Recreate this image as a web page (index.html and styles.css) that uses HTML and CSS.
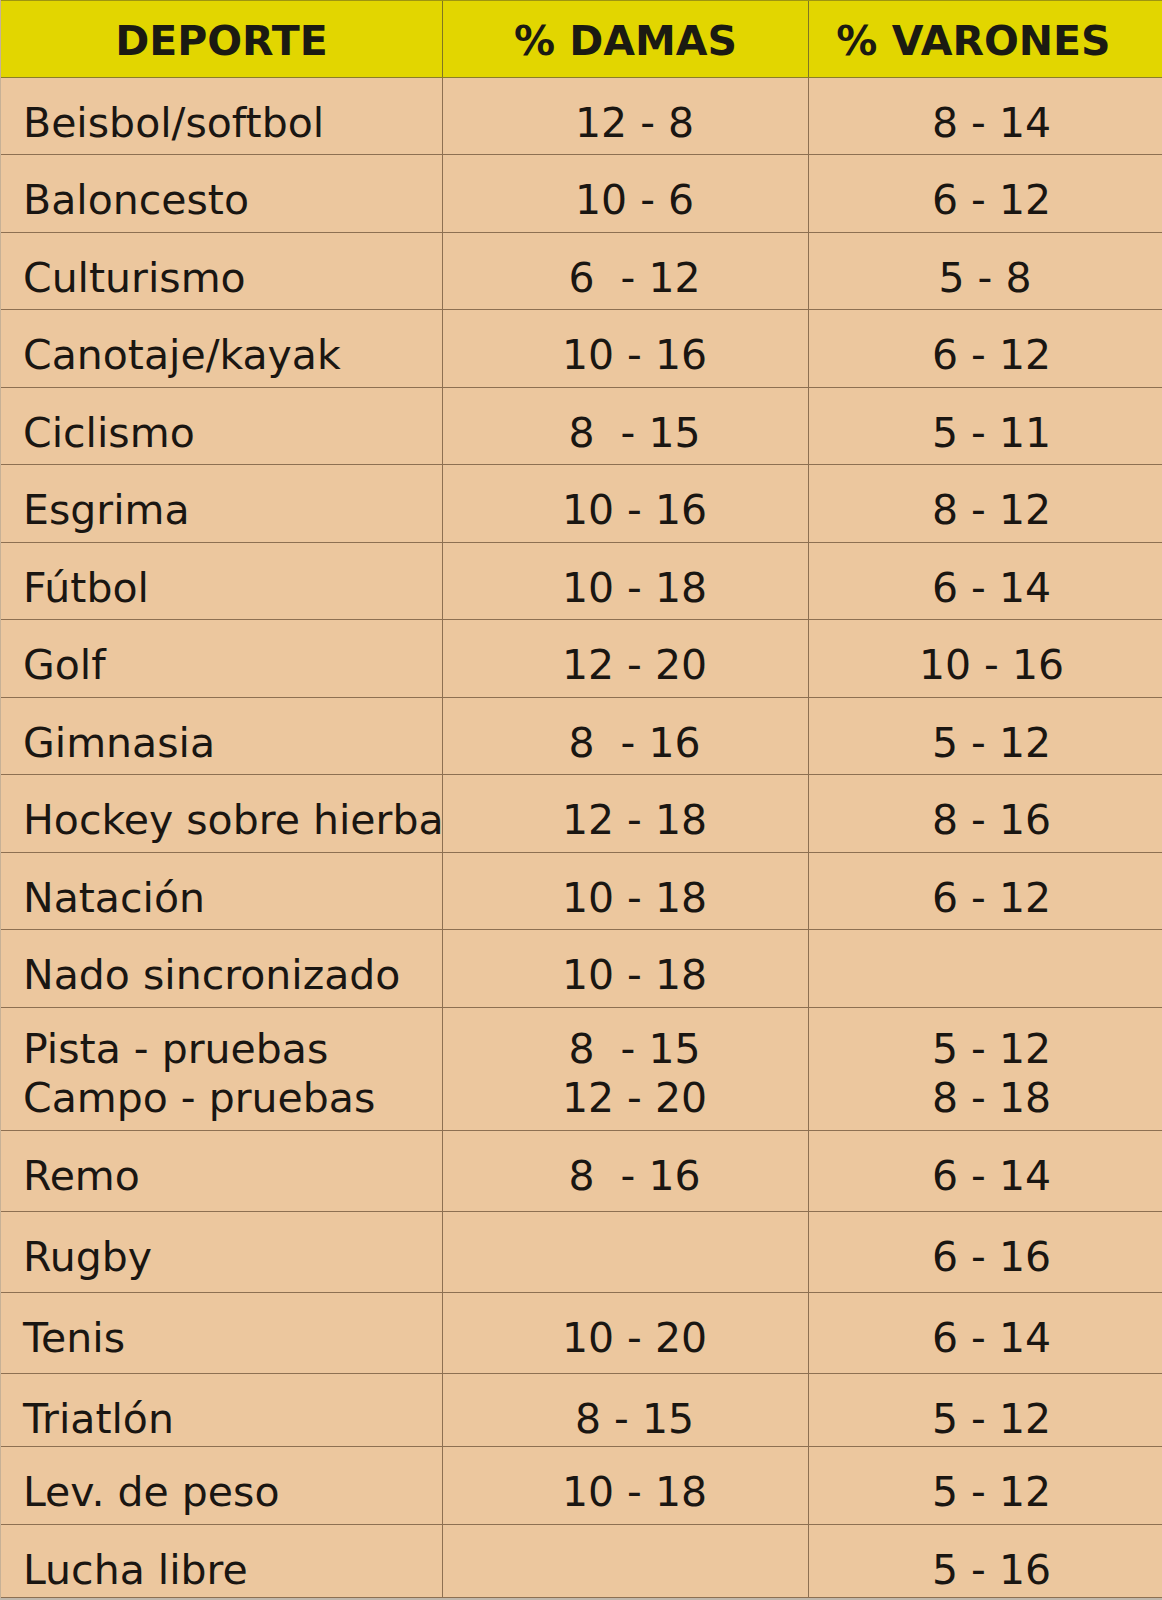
FILE: index.html
```html
<!DOCTYPE html>
<html lang="es">
<head>
<meta charset="utf-8">
<title>Porcentaje de grasa por deporte</title>
<link rel="stylesheet" href="styles.css">
</head>
<body>
<div class="sheet">
  <div class="row head">
    <div class="cell">DEPORTE</div>
    <div class="cell">% DAMAS</div>
    <div class="cell">% VARONES</div>
  </div>
  <div class="row">
    <div class="cell name">Beisbol/softbol</div>
    <div class="cell num">12 - 8</div>
    <div class="cell num v">8 - 14</div>
  </div>
  <div class="row">
    <div class="cell name">Baloncesto</div>
    <div class="cell num">10 - 6</div>
    <div class="cell num v">6 - 12</div>
  </div>
  <div class="row">
    <div class="cell name">Culturismo</div>
    <div class="cell num">6  - 12</div>
    <div class="cell num v">5 - 8 </div>
  </div>
  <div class="row">
    <div class="cell name">Canotaje/kayak</div>
    <div class="cell num">10 - 16</div>
    <div class="cell num v">6 - 12</div>
  </div>
  <div class="row">
    <div class="cell name">Ciclismo</div>
    <div class="cell num">8  - 15</div>
    <div class="cell num v">5 - 11</div>
  </div>
  <div class="row">
    <div class="cell name">Esgrima</div>
    <div class="cell num">10 - 16</div>
    <div class="cell num v">8 - 12</div>
  </div>
  <div class="row">
    <div class="cell name">Fútbol</div>
    <div class="cell num">10 - 18</div>
    <div class="cell num v">6 - 14</div>
  </div>
  <div class="row">
    <div class="cell name">Golf</div>
    <div class="cell num">12 - 20</div>
    <div class="cell num v">10 - 16</div>
  </div>
  <div class="row">
    <div class="cell name">Gimnasia</div>
    <div class="cell num">8  - 16</div>
    <div class="cell num v">5 - 12</div>
  </div>
  <div class="row">
    <div class="cell name">Hockey sobre hierba</div>
    <div class="cell num">12 - 18</div>
    <div class="cell num v">8 - 16</div>
  </div>
  <div class="row">
    <div class="cell name">Natación</div>
    <div class="cell num">10 - 18</div>
    <div class="cell num v">6 - 12</div>
  </div>
  <div class="row">
    <div class="cell name">Nado sincronizado</div>
    <div class="cell num">10 - 18</div>
    <div class="cell num v"></div>
  </div>
  <div class="row double">
    <div class="cell name">Pista - pruebas<br>Campo - pruebas</div>
    <div class="cell num">8  - 15<br>12 - 20</div>
    <div class="cell num v">5 - 12<br>8 - 18</div>
  </div>
  <div class="row h80">
    <div class="cell name">Remo</div>
    <div class="cell num">8  - 16</div>
    <div class="cell num v">6 - 14</div>
  </div>
  <div class="row h82">
    <div class="cell name">Rugby</div>
    <div class="cell num"></div>
    <div class="cell num v">6 - 16</div>
  </div>
  <div class="row h80">
    <div class="cell name">Tenis</div>
    <div class="cell num">10 - 20</div>
    <div class="cell num v">6 - 14</div>
  </div>
  <div class="row h74">
    <div class="cell name">Triatlón</div>
    <div class="cell num">8 - 15</div>
    <div class="cell num v">5 - 12</div>
  </div>
  <div class="row">
    <div class="cell name">Lev. de peso</div>
    <div class="cell num">10 - 18</div>
    <div class="cell num v">5 - 12</div>
  </div>
  <div class="row h74">
    <div class="cell name">Lucha libre</div>
    <div class="cell num"></div>
    <div class="cell num v">5 - 16</div>
  </div>
</div>
</body>
</html>
```

FILE: styles.css
```css
* {
  box-sizing: border-box;
}

html, body {
  margin: 0;
  padding: 0;
}

body {
  background: #bfb7ab;
  font-family: "DejaVu Sans", "Verdana", sans-serif;
  color: #1a1612;
  width: 1162px;
  height: 1600px;
  overflow: hidden;
}

.sheet {
  display: flex;
  flex-direction: column;
  width: 1162px;
  background: #ecc79e;
  border-left: 1px solid #c7b196;
}

.row {
  display: grid;
  grid-template-columns: 442px 366px 1fr;
  height: 77.5px;
  border-bottom: 1px solid #8d7052;
}

.row.double {
  height: 123.5px;
}

.row.h80 {
  height: 80.5px;
}

.row.h82 {
  height: 81.5px;
}

.row.h74 {
  height: 73.5px;
}

.cell {
  border-right: 1px solid #8d7052;
  font-size: 41px;
  line-height: 48px;
  padding-top: 21px;
  white-space: pre;
}

.cell:last-child {
  border-right: none;
}

.name {
  padding-left: 22px;
  white-space: nowrap;
}

.num {
  text-align: center;
  padding-left: 18px;
}

.num.v {
  padding-left: 12px;
}

.double .cell {
  padding-top: 17px;
  line-height: 49px;
}

.head {
  background: #e2d600;
  border-top: 1px solid #9e9510;
  border-bottom: 1px solid #8a7e2a;
}

.head .cell {
  font-weight: bold;
  font-size: 41px;
  text-align: center;
  padding-top: 16px;
  color: #1b1a12;
  border-right-color: #807622;
}

.head .cell:nth-child(3) {
  padding-right: 24px;
}
```
